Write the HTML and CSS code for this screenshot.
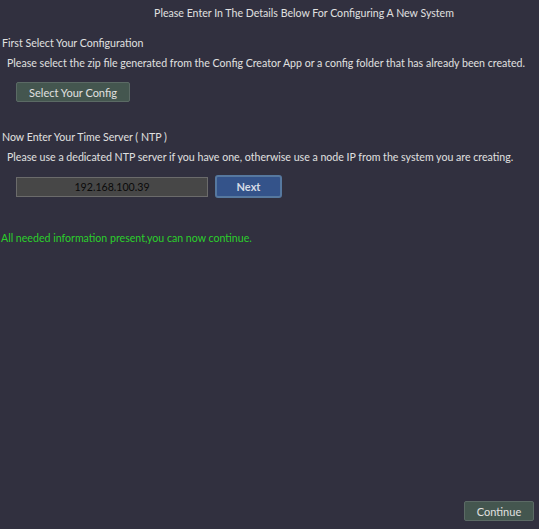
FILE: index.html
```html
<!DOCTYPE html>
<html>
<head>
<meta charset="utf-8">
<link rel="stylesheet" href="styles.css">
</head>
<body>
<div class="app">
  <div class="title">Please Enter In The Details Below For Configuring A New System</div>
  <div class="section">
    <div class="heading">First Select Your Configuration</div>
    <div class="desc">Please select the zip file generated from the Config Creator App or a config folder that has already been created.</div>
    <div class="row">
      <button class="btn btn-green">Select Your Config</button>
    </div>
  </div>
  <div class="section section-ntp">
    <div class="heading">Now Enter Your Time Server ( NTP )</div>
    <div class="desc">Please use a dedicated NTP server if you have one, otherwise use a node IP from the system you are creating.</div>
    <div class="row row-ntp">
      <div class="input">192.168.100.39</div>
      <button class="btn btn-next">Next</button>
    </div>
  </div>
  <div class="status">All needed information present,you can now continue.</div>
  <div class="footer">
    <button class="btn btn-green btn-continue">Continue</button>
  </div>
</div>
</body>
</html>
```

FILE: styles.css
```css
html, body {
  margin: 0;
  padding: 0;
  height: 100%;
}
body {
  background: #31303f;
  font-family: "Lato", "Open Sans", sans-serif;
  font-size: 10.6px;
  color: #e0e0e0;
}
.app {
  height: 529px;
  display: flex;
  flex-direction: column;
  box-sizing: border-box;
  white-space: nowrap;
}
.title {
  padding-left: 69px;
  text-align: center;
  line-height: 14px;
  margin-top: 6px;
}
.section {
  margin-top: 16px;
}
.section-ntp {
  margin-top: 28px;
}
.heading {
  padding-left: 2px;
  line-height: 14px;
}
.desc {
  padding-left: 7px;
  line-height: 14px;
  margin-top: 6px;
}
.row {
  display: flex;
  align-items: center;
  padding-left: 16px;
  margin-top: 12px;
}
.row-ntp {
  margin-top: 11px;
  gap: 7px;
}
.btn {
  font-family: inherit;
  font-size: 11px;
  color: #e0e0e0;
  margin: 0;
  padding: 0;
  cursor: default;
}
.btn-green {
  width: 114px;
  height: 20px;
  background: #44564f;
  border: 1px solid #5b6a65;
  border-radius: 2px;
}
.input {
  width: 192px;
  height: 20px;
  box-sizing: border-box;
  background: #474747;
  border: 1px solid #6b6b6b;
  color: #0a0a0a;
  text-align: center;
  line-height: 18px;
}
.btn-next {
  width: 67px;
  height: 23px;
  background: #34538a;
  border: 2px solid #56789f;
  border-radius: 3px;
  font-weight: bold;
  color: #d6dbe6;
}
.status {
  margin-top: 33px;
  padding-left: 1px;
  color: #2bcf2b;
  line-height: 14px;
}
.footer {
  margin-top: auto;
  display: flex;
  justify-content: flex-end;
  padding-right: 5px;
  padding-bottom: 8px;
}
.btn-continue {
  width: 70px;
  height: 20px;
}
```
